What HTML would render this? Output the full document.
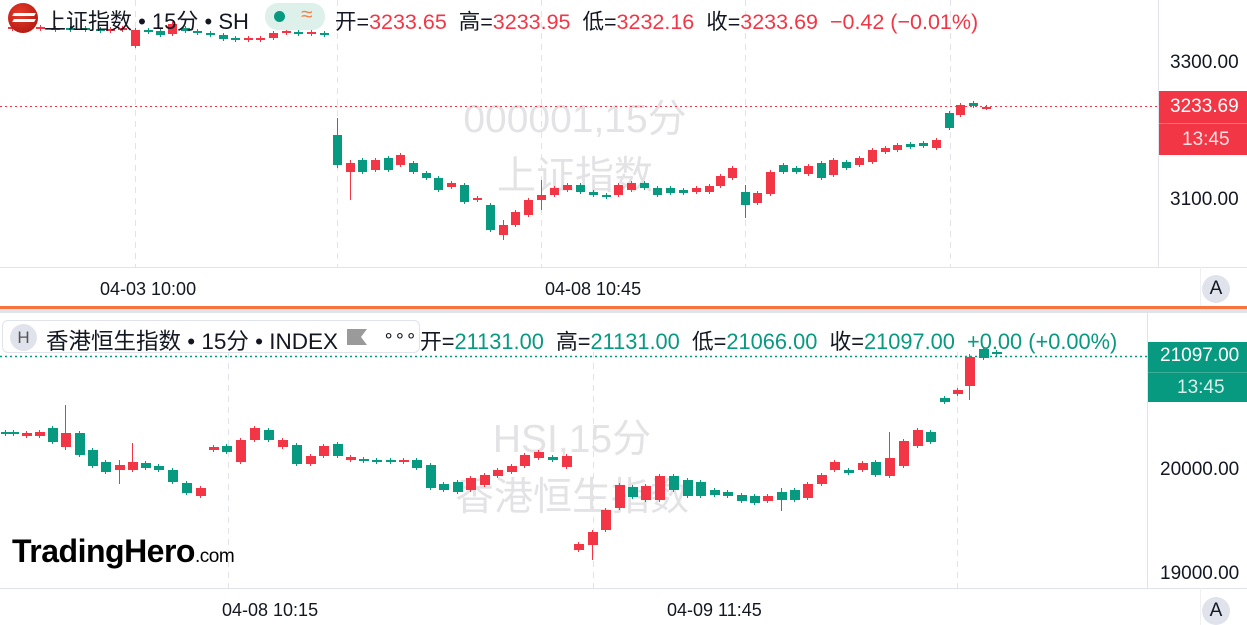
<!DOCTYPE html>
<html><head><meta charset="utf-8"><style>
*{margin:0;padding:0;box-sizing:border-box}
body{width:1247px;height:625px;overflow:hidden;background:#fff;font-family:"Liberation Sans","Noto Sans CJK SC",sans-serif;position:relative;color:#131722}
.abs{position:absolute;white-space:nowrap}
.r{color:#f23645}.g{color:#089981}
.wm{position:absolute;color:#e3e3e6;font-size:39px;text-align:center;width:440px}
.ax{font-size:18px;color:#131722}
.A{position:absolute;width:28px;height:28px;border-radius:14px;background:#e0e3eb;font-size:19px;text-align:center;line-height:28px}
</style></head><body>
<div class="wm" style="left:355px;top:88px">000001,15分</div>
<div class="wm" style="left:355px;top:145px">上证指数</div>
<div class="wm" style="left:352px;top:408px">HSI,15分</div>
<div class="wm" style="left:352px;top:466px">香港恒生指数</div>
<svg id="s" class="abs" style="left:0;top:0" width="1247" height="625"></svg>

<div class="abs" style="left:8px;top:3px;width:30px;height:30px;border-radius:15px;background:radial-gradient(circle at 40% 35%,#e83a2a,#a5120c)"></div>
<div class="abs" style="left:13px;top:13px;width:22px;height:3px;background:#fff;transform:skewX(-30deg)"></div>
<div class="abs" style="left:13px;top:19px;width:22px;height:3px;background:#fff;transform:skewX(-30deg)"></div>
<div class="abs" style="left:44px;top:4px;font-size:22px">上证指数 • 15分 • SH</div>
<div class="abs" style="left:265px;top:3px;width:60px;height:27px;border-radius:13px;background:#ddf0ea"></div>
<div class="abs" style="left:274px;top:11px;width:11px;height:11px;border-radius:6px;background:#089981"></div>
<div class="abs" style="left:301px;top:3px;font-size:21px;color:#f5824a">≈</div>
<div class="abs" style="left:335px;top:5px;font-size:21.5px">开=<span class="r">3233.65</span>&nbsp; 高=<span class="r">3233.95</span>&nbsp; 低=<span class="r">3232.16</span>&nbsp; 收=<span class="r">3233.69</span>&nbsp; <span class="r">−0.42 (−0.01%)</span></div>

<div class="abs ax" style="left:1170px;top:52px;font-size:19px">3300.00</div>
<div class="abs ax" style="left:1170px;top:189px;font-size:19px">3100.00</div>
<div class="abs" style="left:1159px;top:91px;width:88px;height:64px;background:#f23645"></div>
<div class="abs" style="left:1159px;top:123px;width:88px;height:1px;background:#f6707c"></div>
<div class="abs" style="left:1170px;top:96px;font-size:19px;color:#fff">3233.69</div>
<div class="abs" style="left:1182px;top:129px;font-size:19px;color:#fde0e3">13:45</div>
<div class="abs ax" style="left:100px;top:279px">04-03 10:00</div>
<div class="abs ax" style="left:545px;top:279px">04-08 10:45</div>
<div class="A" style="left:1202px;top:275px">A</div>

<div class="abs" style="left:2px;top:320px;width:418px;height:33px;border:1px solid #e0e3eb;border-radius:6px;background:#fff"></div>
<div class="abs" style="left:10px;top:324px;width:27px;height:27px;border-radius:14px;background:#e0e3eb;color:#555;font-size:17px;text-align:center;line-height:27px">H</div>
<div class="abs" style="left:46px;top:324px;font-size:22.5px">香港恒生指数 • 15分 • INDEX</div>
<div class="abs" style="left:347px;top:329px;width:20px;height:16px;background:#9a9a9a;clip-path:polygon(0 0,100% 0,70% 50%,100% 100%,0 100%)"></div>
<div class="abs" style="left:383px;top:325px;font-size:18px">∘∘∘</div>
<div class="abs" style="left:420px;top:325px;font-size:21.8px">开=<span class="g">21131.00</span>&nbsp; 高=<span class="g">21131.00</span>&nbsp; 低=<span class="g">21066.00</span>&nbsp; 收=<span class="g">21097.00</span>&nbsp; <span class="g">+0.00 (+0.00%)</span></div>

<div class="abs" style="left:1148px;top:342px;width:99px;height:60px;background:#089981"></div>
<div class="abs" style="left:1148px;top:372px;width:99px;height:1px;background:#3fae98"></div>
<div class="abs" style="left:1160px;top:345px;font-size:19px;color:#fff">21097.00</div>
<div class="abs" style="left:1177px;top:377px;font-size:19px;color:#d7efe9">13:45</div>
<div class="abs ax" style="left:1160px;top:459px;font-size:19px">20000.00</div>
<div class="abs ax" style="left:1160px;top:563px;font-size:19px">19000.00</div>
<div class="abs ax" style="left:222px;top:600px">04-08 10:15</div>
<div class="abs ax" style="left:667px;top:600px">04-09 11:45</div>
<div class="A" style="left:1202px;top:597px">A</div>
<div class="abs" style="left:12px;top:533px;font-size:32px;font-weight:bold;letter-spacing:-0.5px;color:#000">TradingHero<span style="font-size:19px;font-weight:normal">.com</span></div>

<script>
var s=document.getElementById('s'),h='';
function L(x1,y1,x2,y2,c,d,w){h+='<line x1="'+x1+'" y1="'+y1+'" x2="'+x2+'" y2="'+y2+'" stroke="'+c+'" stroke-width="'+(w||1)+'"'+(d?' stroke-dasharray="'+d+'"':'')+'/>';}
function R(x,y,w,hh,c){h+='<rect x="'+x+'" y="'+y+'" width="'+w+'" height="'+hh+'" fill="'+c+'"/>';}
[135,337,541,745,950].forEach(function(x){L(x+.5,0,x+.5,267,'#e0e3eb','6 5')});
[228,593,957].forEach(function(x){L(x+.5,352,x+.5,588,'#e0e3eb','6 5')});
L(1158.5,0,1158.5,267,'#e0e3eb');L(0,267.5,1247,267.5,'#e0e3eb');L(1200.5,267,1200.5,307,'#f0f0f3');
R(0,306,1247,3,'#f7743f');R(0,309,1247,4,'#e0e3eb');
L(1147.5,313,1147.5,588,'#e0e3eb');L(0,588.5,1247,588.5,'#e0e3eb');L(1200.5,588,1200.5,625,'#f0f0f3');
L(0,106.5,1158,106.5,'#f23645','2 3');
L(0,356.5,1147,356.5,'#089981','2 3',1.5);
var G='#089981',Rd='#f23645';
function C(a,w){a.forEach(function(c){var col=c[3]=='g'?G:Rd;var hi=c[4]||c[1]-2,lo=c[5]||c[2]+2;L(c[0]+.5,hi,c[0]+.5,lo,col);R(c[0]-4,c[1],w||9,Math.max(2,c[2]-c[1]),col);});}
C([[12,27,29,'r'],[25,27,29,'g'],[40,27,29,'r'],[55,28,30,'g'],[70,28,30,'g'],[85,28,30,'g'],[100,29,31,'g'],[110,29,31,'r'],[122,28,30,'r'],[135,30,46,'r'],[148,30,32,'g'],[160,31,35,'g'],[172,24,34,'r'],[185,28,31,'g'],[197,31,33,'g'],[210,33,35,'g'],[223,35,39,'g'],[235,38,40,'g'],[248,38,40,'r'],[260,38,40,'r'],[273,33,38,'r'],[286,31,33,'r'],[298,32,34,'g'],[311,32,34,'r'],[324,33,35,'g'],
[337,135,165,'g',118,168],[350,163,172,'r',160,200],[362,160,172,'g'],[375,160,170,'r'],[388,158,170,'g'],[400,155,165,'r'],[413,163,172,'g'],[426,173,178,'g'],[438,178,190,'g'],[451,183,187,'r'],[464,185,202,'g'],[477,198,200,'r'],[490,205,230,'g'],[503,225,235,'r',220,240],[515,212,225,'r'],[528,200,215,'r'],[541,195,200,'r',180,210],[554,188,195,'r'],[567,185,190,'r'],[580,185,192,'g'],[593,192,195,'g'],[606,195,197,'g'],[618,185,195,'r'],[631,183,190,'r'],[644,183,188,'g'],[657,188,195,'g'],[670,188,193,'g'],[683,190,193,'g'],[696,188,192,'r'],[709,186,192,'r'],[720,176,186,'r'],[732,168,178,'r'],[745,192,205,'g',185,218],[757,193,203,'r'],[770,172,194,'r'],[783,165,172,'g'],[796,168,172,'g'],[808,166,174,'r'],[821,163,178,'g'],[833,160,175,'r'],[846,162,168,'g'],[859,158,165,'r'],[872,150,162,'r'],[885,148,152,'r'],[897,145,150,'r'],[910,144,147,'g'],[923,143,146,'g'],[936,140,148,'r'],[949,113,128,'g'],[960,105,115,'r'],[973,103,106,'g'],[986,107,108,'r']],9);
C([[5,432,434,'g'],[13,432,434,'g'],[26,433,436,'r'],[39,432,436,'r'],[52,428,442,'g'],[65,433,447,'r',405,450],[79,433,455,'g'],[92,450,466,'g'],[105,462,472,'g'],[119,465,470,'r',460,484],[132,462,470,'r',443,472],[145,463,468,'g'],[158,466,470,'g'],[172,470,482,'g'],[186,483,493,'g'],[200,488,496,'r'],[213,447,450,'r'],[226,446,452,'g'],[240,440,462,'r'],[254,428,440,'r'],[268,430,440,'g'],[282,440,447,'r'],[296,445,464,'g'],[310,456,464,'r'],[323,446,456,'r'],[337,444,456,'g'],[350,457,460,'r'],[363,459,461,'g'],[376,460,462,'g'],[390,460,462,'g'],[403,460,462,'r'],[416,460,468,'g'],[430,465,488,'g'],[443,484,490,'g'],[457,482,492,'g'],[470,478,490,'r'],[484,475,485,'r'],[497,470,476,'r'],[511,466,472,'r'],[524,455,466,'r'],[538,452,458,'r'],[552,457,460,'g'],[566,456,467,'r'],[578,544,550,'r'],[592,532,545,'r',530,560],[605,510,530,'r'],[619,485,508,'r'],[632,487,497,'g'],[645,486,500,'r'],[659,476,500,'r'],[673,476,490,'g'],[687,480,496,'g'],[700,482,496,'g'],[714,490,495,'g'],[727,492,496,'g'],[741,495,501,'g'],[754,496,503,'g'],[767,496,501,'r'],[781,492,500,'g',488,511],[794,490,500,'g'],[807,484,498,'r'],[821,475,484,'r'],[834,462,470,'r'],[848,470,473,'g'],[862,463,470,'r'],[875,462,475,'g'],[889,458,476,'r',432,478],[903,441,466,'r'],[917,430,446,'r'],[930,432,442,'g'],[944,398,402,'g'],[957,390,394,'r'],[969,357,386,'r',354,400],[983,349,358,'g'],[996,352,354,'g']],10);
s.innerHTML=h;
</script>
</body></html>
